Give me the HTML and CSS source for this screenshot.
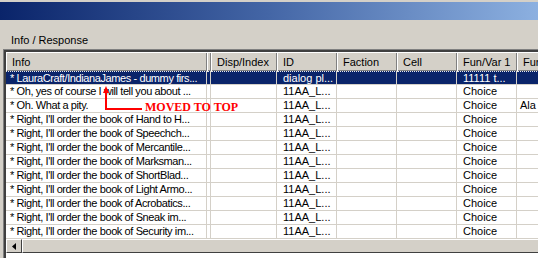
FILE: index.html
```html
<!DOCTYPE html>
<html lang="en">
<head>
<meta charset="UTF-8">
<title>Info / Response</title>
<link rel="stylesheet" href="styles.css">
</head>
<body>
<div class="window">
<div class="titlebar"></div>

<div class="group-label">Info / Response</div>

<div class="listview">
<table class="grid">
<colgroup>
  <col class="c-info">
  <col class="c-gap">
  <col class="c-disp">
  <col class="c-mid">
  <col class="c-mid">
  <col class="c-mid">
  <col class="c-mid">
  <col class="c-last">
</colgroup>
<thead>
<tr>
  <th>Info</th>
  <th></th>
  <th>Disp/Index</th>
  <th>ID</th>
  <th>Faction</th>
  <th>Cell</th>
  <th>Fun/Var 1</th>
  <th>Fun</th>
</tr>
</thead>
<tbody>
<tr class="selected">
  <td class="first">* LauraCraft/IndianaJames - dummy firs...</td>
  <td></td><td></td>
  <td>dialog pl...</td>
  <td></td><td></td>
  <td>11111 t...</td>
  <td></td>
</tr>
<tr>
  <td class="first">* Oh, yes of course I will tell you about ...</td>
  <td></td><td></td><td>11AA_L...</td><td></td><td></td><td>Choice</td><td></td>
</tr>
<tr>
  <td class="first">* Oh. What a pity.</td>
  <td></td><td></td><td>11AA_L...</td><td></td><td></td><td>Choice</td><td class="last">Ala</td>
</tr>
<tr>
  <td class="first">* Right, I'll order the book of Hand to H...</td>
  <td></td><td></td><td>11AA_L...</td><td></td><td></td><td>Choice</td><td></td>
</tr>
<tr>
  <td class="first">* Right, I'll order the book of Speechch...</td>
  <td></td><td></td><td>11AA_L...</td><td></td><td></td><td>Choice</td><td></td>
</tr>
<tr>
  <td class="first">* Right, I'll order the book of Mercantile...</td>
  <td></td><td></td><td>11AA_L...</td><td></td><td></td><td>Choice</td><td></td>
</tr>
<tr>
  <td class="first">* Right, I'll order the book of Marksman...</td>
  <td></td><td></td><td>11AA_L...</td><td></td><td></td><td>Choice</td><td></td>
</tr>
<tr>
  <td class="first">* Right, I'll order the book of ShortBlad...</td>
  <td></td><td></td><td>11AA_L...</td><td></td><td></td><td>Choice</td><td></td>
</tr>
<tr>
  <td class="first">* Right, I'll order the book of Light Armo...</td>
  <td></td><td></td><td>11AA_L...</td><td></td><td></td><td>Choice</td><td></td>
</tr>
<tr>
  <td class="first">* Right, I'll order the book of Acrobatics...</td>
  <td></td><td></td><td>11AA_L...</td><td></td><td></td><td>Choice</td><td></td>
</tr>
<tr>
  <td class="first">* Right, I'll order the book of Sneak im...</td>
  <td></td><td></td><td>11AA_L...</td><td></td><td></td><td>Choice</td><td></td>
</tr>
<tr>
  <td class="first">* Right, I'll order the book of Security im...</td>
  <td></td><td></td><td>11AA_L...</td><td></td><td></td><td>Choice</td><td></td>
</tr>
</tbody>
</table>

<div class="hscroll">
  <div class="scroll-btn">
    <svg width="4" height="7" viewBox="0 0 4 7"><polygon points="4,0 4,7 0,3.5" fill="#000"/></svg>
  </div>
  <div class="scroll-thumb"></div>
</div>

<!-- annotation drawn over the list -->
<div class="note">
  <svg class="note-arrow" width="40" height="28" viewBox="0 0 40 28">
    <polyline points="3,7 3,23 39,23" fill="none" stroke="#f00" stroke-width="2"/>
    <polygon points="3,0 0,7 6,7" fill="#f00"/>
  </svg>
  <span class="note-text">MOVED TO TOP</span>
</div>
</div>
</div>
</body>
</html>
```

FILE: styles.css
```css
html,body{margin:0;padding:0;}
body{background:#d4d0c8;width:538px;height:258px;overflow:hidden;font-family:"Liberation Sans",Arial,sans-serif;font-size:11px;color:#000;}
.window{width:538px;}
.titlebar{height:18px;border-top:2px solid #d4d0c8;background:linear-gradient(to right,#0a246a 0%,#4466a6 50%,#8cb0e0 100%);}
.group-label{margin:14px 0 0 11px;line-height:13px;height:16px;}
.listview{position:relative;margin-left:4px;width:600px;height:210px;background:#fff;border-top:2px solid #404040;border-left:2px solid #404040;box-shadow:-1px -1px 0 #808080;overflow:hidden;}
.grid{border-collapse:separate;border-spacing:0;table-layout:fixed;width:511px;}
.c-info{width:201px;}
.c-gap{width:4px;}
.c-disp{width:66px;}
.c-mid{width:60px;}
.c-last{width:60px;}
.grid th{background:#d4d0c8;font-weight:normal;text-align:left;height:18px;line-height:17px;padding:1px 0 0 6px;box-shadow:inset 1px 1px 0 #fff,inset -1px -1px 0 #808080;white-space:nowrap;overflow:hidden;}
.grid td{height:13px;line-height:13px;padding:0 0 0 6px;border-right:1px solid #d4d0c8;border-bottom:1px solid #d4d0c8;white-space:nowrap;overflow:hidden;}
.grid td.first{padding-left:4px;letter-spacing:-0.4px;}
.grid td.last{padding-left:3px;}
.grid tr.selected td{background:#0a246a;color:#fff;border-top:1px dotted #e8e8e8;height:12px;line-height:12px;}
.hscroll{display:flex;height:14px;}
.scroll-btn{width:14px;height:12px;display:flex;align-items:center;justify-content:center;background:#d4d0c8;border:1px solid;border-color:#fff #404040 #404040 #fff;}
.scroll-thumb{flex:1;background:#d4d0c8;border:1px solid;border-color:#fff #404040 #404040 #fff;}
.note{position:absolute;left:97px;top:34px;display:flex;align-items:flex-end;}
.note-arrow{display:block;}
.note-text{font-family:"Liberation Serif","Times New Roman",serif;font-weight:bold;font-size:12px;line-height:12px;color:#f00;margin-left:2px;position:relative;top:-1px;}
```
